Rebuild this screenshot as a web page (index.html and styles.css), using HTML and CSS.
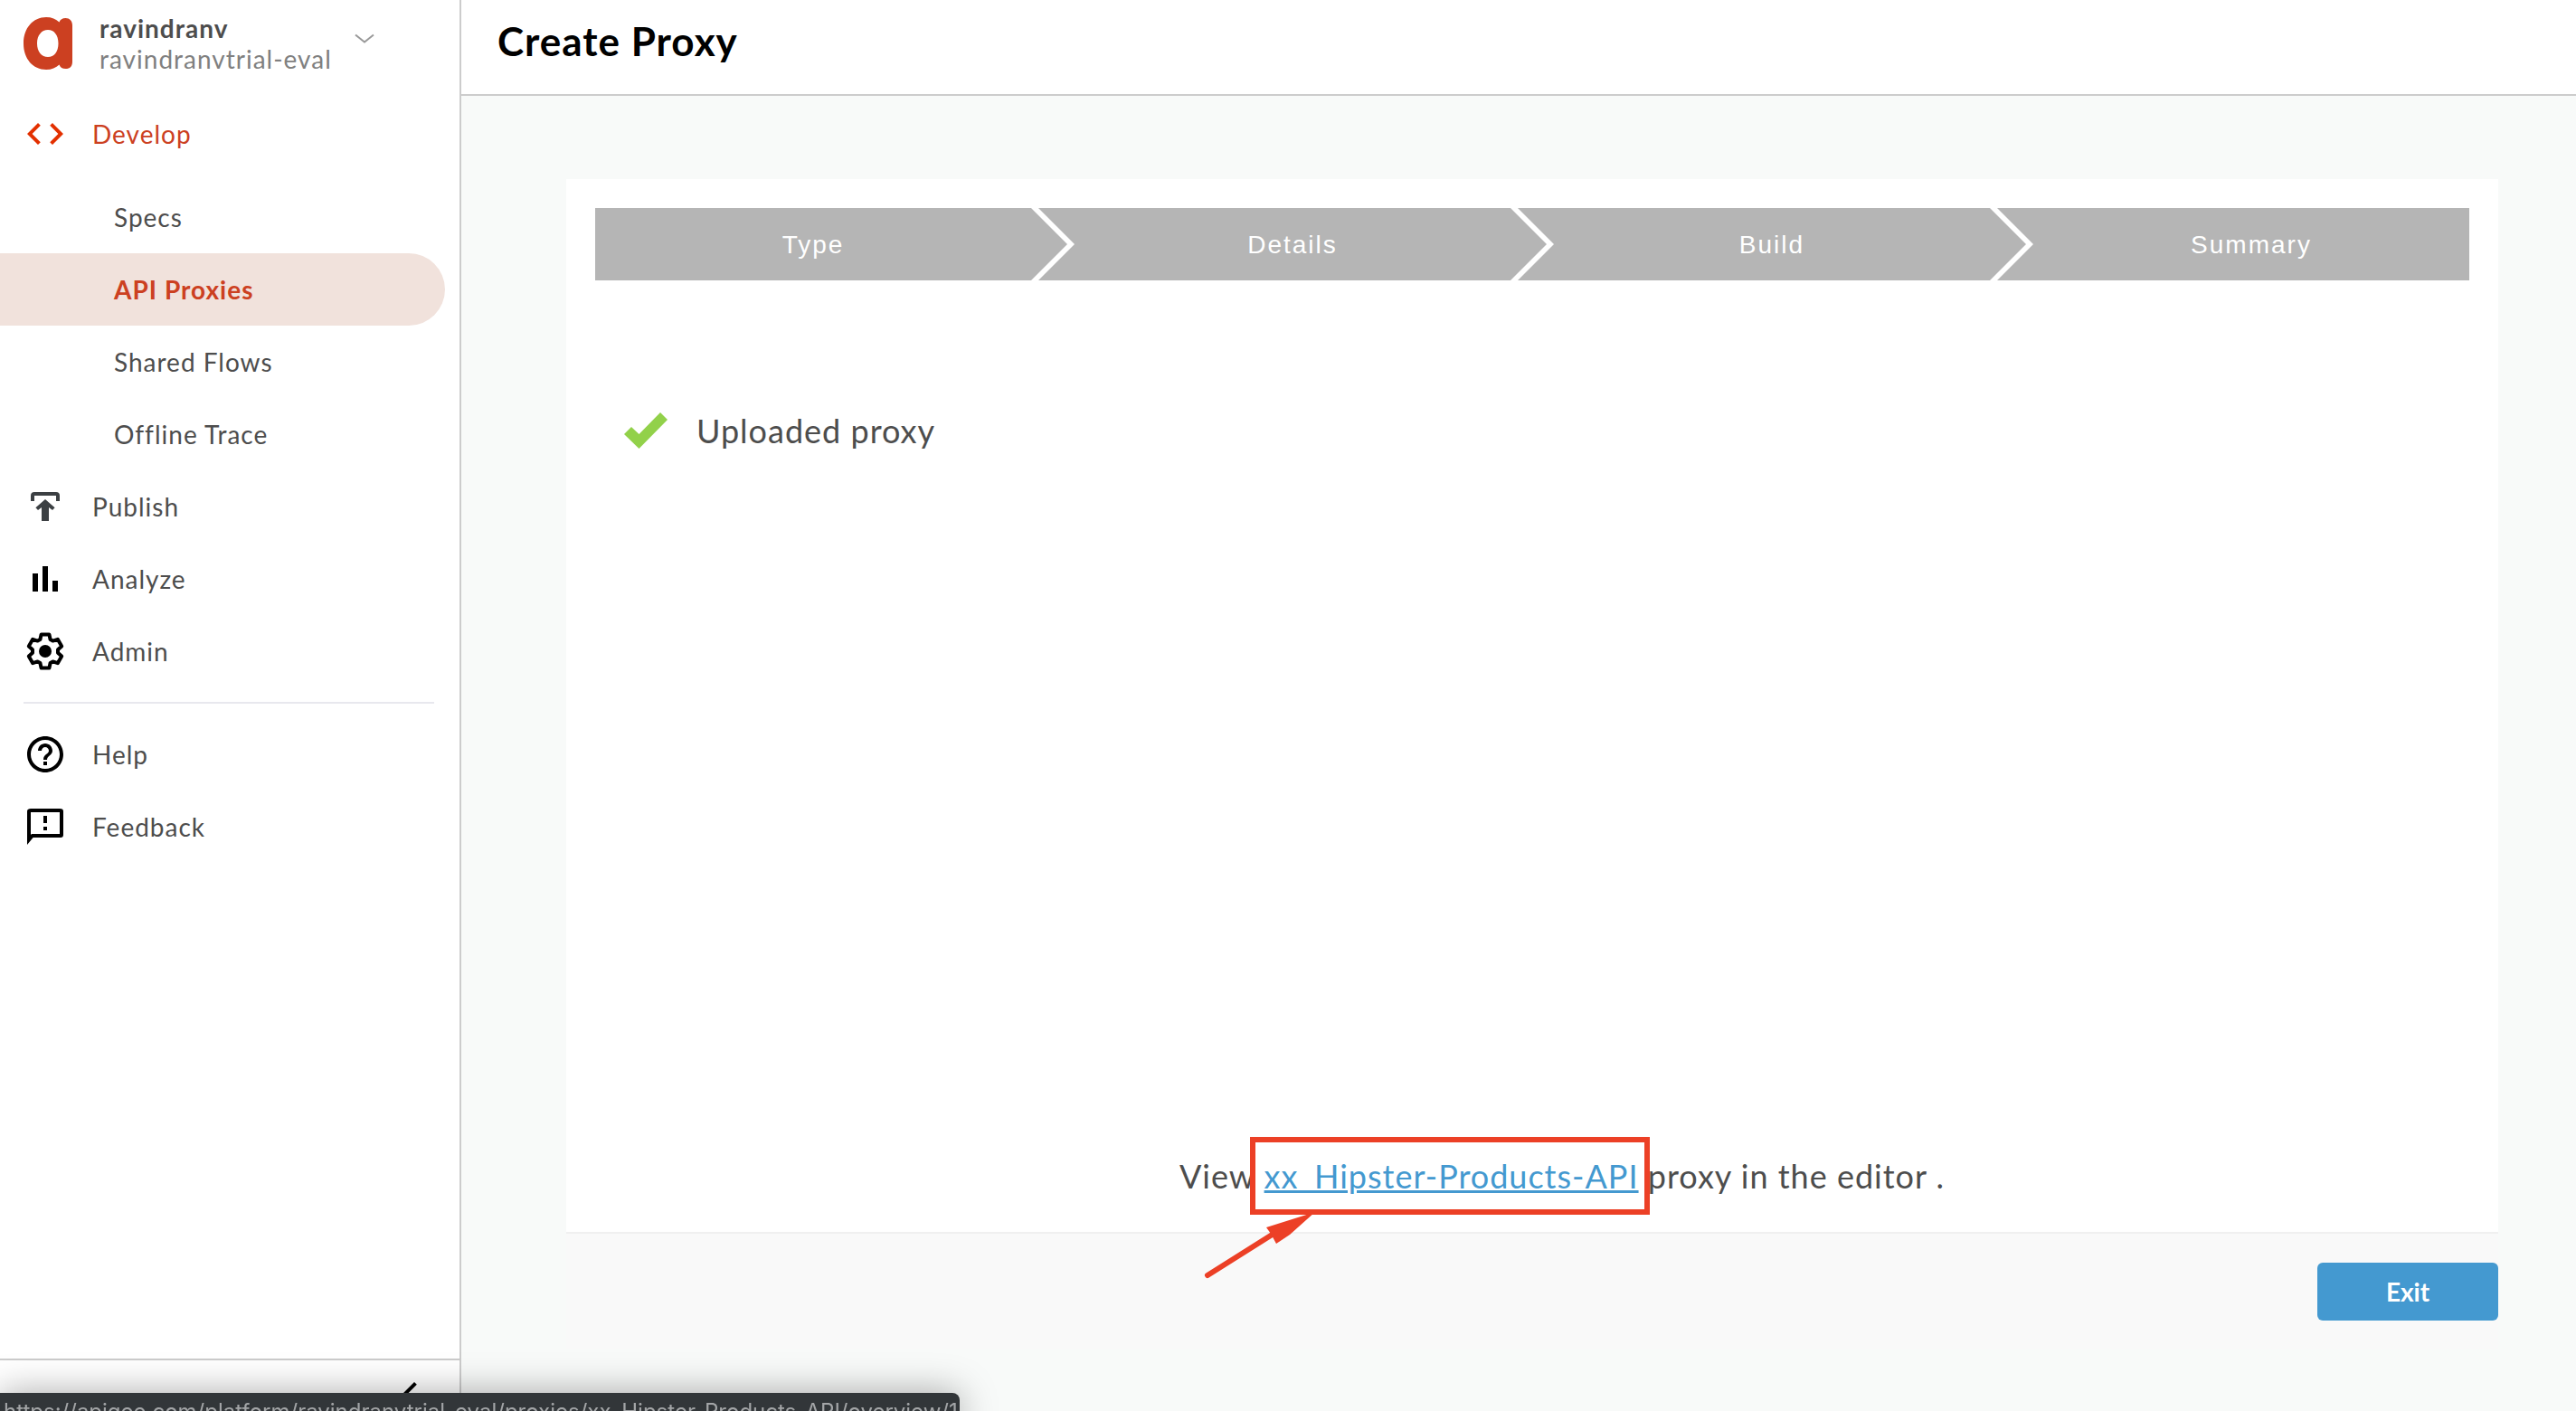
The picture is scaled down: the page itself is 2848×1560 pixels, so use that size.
FILE: index.html
```html
<!DOCTYPE html>
<html lang="en">
<head>
<meta charset="utf-8">
<meta name="viewport" content="width=device-width, initial-scale=1">
<title>Create Proxy</title>
<link rel="stylesheet" href="styles.css">
</head>
<body>
<div class="app">
  <aside class="sidebar">
    <button class="account" type="button">
      <svg class="logo" viewBox="0 0 54 58" aria-hidden="true"><path fill="#cc4021" fill-rule="evenodd" d="M25 0C31 0 36 2 39.500 5.500C40.500 2.500 43 1 46.500 1C51 1 54 4 54 9V49C54 54.500 51.500 57 46.500 57C43 57 40.500 55.500 39.500 52.500C36 56 31 58 25 58C10.500 58 0 46 0 29C0 12 10.500 0 25 0ZM27 14C20 14 15 20 15 29C15 38 20 44 27 44C34 44 38.500 38 38.500 29C38.500 20 34 14 27 14Z"/></svg>
      <span class="account-text">
        <strong class="account-user">ravindranv</strong>
        <span class="account-org">ravindranvtrial-eval</span>
      </span>
      <svg class="caret" viewBox="0 0 22 12" aria-hidden="true"><path d="M1 1.500L11 9.500L21 1.500" fill="none" stroke="#999" stroke-width="2"/></svg>
    </button>
    <nav class="nav">
      <a class="item develop" href="#develop"><svg class="icon" viewBox="0 0 24 24" aria-hidden="true"><path fill="#e33000" d="M9.400 16.600L4.800 12l4.600-4.600L8 6l-6 6 6 6zM14.600 16.600l4.600-4.600-4.600-4.600L16 6l6 6-6 6z"/></svg>Develop</a>
      <a class="item sub" href="#specs">Specs</a>
      <a class="item sub current" href="#proxies" aria-current="page">API Proxies</a>
      <a class="item sub" href="#flows">Shared Flows</a>
      <a class="item sub" href="#trace">Offline Trace</a>
      <a class="item" href="#publish"><svg class="icon" viewBox="0 0 24 24" aria-hidden="true"><path d="M5 9V6Q5 5 6 5H18Q19 5 19 6V9" fill="none" stroke="#3c4043" stroke-width="2"/><path fill="#3c4043" d="M12 8L17.300 12.600L16 14L14 12.500V20H10V12.500L8 14L6.700 12.600Z"/></svg>Publish</a>
      <a class="item" href="#analyze"><svg class="icon" viewBox="0 0 24 24" aria-hidden="true"><path d="M5 9h3v10H5zM10.500 5h3v14h-3zM16 13h3v6h-3z"/></svg>Analyze</a>
      <a class="item" href="#admin"><svg class="icon" viewBox="0 0 24 24" aria-hidden="true"><circle cx="12" cy="12" r="3.500"/><path fill="none" stroke="#000" stroke-width="2" stroke-linejoin="round" d="M9.800 2.700H14.200L14.800 5.500L16.200 6.300L18.900 5.400L21.100 9.200L19 11.100V12.900L21.100 14.800L18.900 18.600L16.200 17.700L14.800 18.500L14.200 21.300H9.800L9.200 18.500L7.800 17.700L5.100 18.600L2.900 14.800L5 12.900V11.100L2.900 9.200L5.100 5.400L7.800 6.300L9.200 5.500Z"/></svg>Admin</a>
      <hr class="rule">
      <a class="item" href="#help"><svg class="icon" viewBox="0 0 24 24" aria-hidden="true"><path d="M11 18h2v-2h-2v2zm1-16C6.480 2 2 6.480 2 12s4.480 10 10 10 10-4.480 10-10S17.520 2 12 2zm0 18c-4.410 0-8-3.590-8-8s3.590-8 8-8 8 3.590 8 8-3.590 8-8 8zm0-14c-2.210 0-4 1.790-4 4h2c0-1.100.9-2 2-2s2 .9 2 2c0 2-3 1.750-3 5h2c0-2.250 3-2.500 3-5 0-2.210-1.790-4-4-4z"/></svg>Help</a>
      <a class="item" href="#feedback"><svg class="icon" viewBox="0 0 24 24" aria-hidden="true"><path fill-rule="evenodd" d="M20 2H4c-1.100 0-1.990.4-1.990 1.500L2 22l3.300-4H20.500c1.100 0 1.500-.5 1.500-1.500V3.500C22 2.500 21.500 2 20 2zM20 16H4.500L4 16.500V4h16v12zM11 12h2v2h-2zM11 6h2v4h-2z"/></svg>Feedback</a>
    </nav>
    <footer class="collapse">
      <button class="collapse-button" type="button" aria-label="Collapse menu"><svg class="icon" viewBox="0 0 24 24" aria-hidden="true"><path d="M15.410 7.410L14 6l-6 6 6 6 1.410-1.410L10.830 12z"/></svg></button>
    </footer>
  </aside>
  <div class="page">
    <header class="page-header"><h1 class="title">Create Proxy</h1></header>
    <main class="wizard">
      <section class="card">
        <ol class="steps">
          <li class="step">Type<svg class="chevron" viewBox="0 0 48 80" aria-hidden="true"><path fill="#fff" d="M0 0H8L48 40L8 80H0L40 40Z"/></svg></li>
          <li class="step">Details<svg class="chevron" viewBox="0 0 48 80" aria-hidden="true"><path fill="#fff" d="M0 0H8L48 40L8 80H0L40 40Z"/></svg></li>
          <li class="step">Build<svg class="chevron" viewBox="0 0 48 80" aria-hidden="true"><path fill="#fff" d="M0 0H8L48 40L8 80H0L40 40Z"/></svg></li>
          <li class="step">Summary</li>
        </ol>
        <p class="result"><svg class="tick" viewBox="0 0 48 40" aria-hidden="true"><path fill="#92d14a" d="M0 24L8 16L16.500 24L40 0L48 8L16.500 40Z"/></svg>Uploaded proxy</p>
        <p class="view">View <span class="marked"><a class="link" href="#editor">xx_Hipster-Products-API</a><span class="frame"></span><svg class="arrow" viewBox="0 0 124 76" aria-hidden="true"><path d="M5 70L78 24" stroke="#ec4026" stroke-width="6" stroke-linecap="round"/><path fill="#ec4026" d="M124 0L70 17L75 24L81 35L96 25Z"/></svg></span> proxy in the editor .</p>
      </section>
      <div class="actions"><button class="exit" type="button">Exit</button></div>
    </main>
  </div>
</div>
<div class="status">https://apigee.com/platform/ravindranvtrial-eval/proxies/xx_Hipster-Products-API/overview/1</div>
</body>
</html>
```

FILE: styles.css
```css
* { box-sizing: border-box; }

body {
  margin: 0;
  overflow: hidden;
  background: #fff;
  color: #4d4d4d;
  font: 28px/34px Lato, sans-serif;
  letter-spacing: 1px;
}

button {
  border: 0;
  padding: 0;
  background: none;
  font: inherit;
  letter-spacing: inherit;
  cursor: pointer;
}

svg { display: block; flex: none; }

.app {
  display: grid;
  grid-template-columns: 510px 1fr;
  min-height: 100vh;
}

/* Sidebar */
.sidebar {
  display: flex;
  flex-direction: column;
  border-right: 2px solid #ccc;
}
.account {
  display: flex;
  align-items: flex-start;
  height: 108px;
  padding: 14px 26px 0;
  text-align: left;
}
.logo { width: 54px; height: 58px; margin-top: 5px; }
.account-text {
  display: flex;
  flex-direction: column;
  margin: 0 25px 0 30px;
}
.account-user { color: #4d4d4d; }
.account-org { color: #808080; }
.caret { width: 22px; height: 12px; margin-top: 23px; }

.nav { display: flex; flex-direction: column; }
.item {
  display: flex;
  align-items: center;
  gap: 28px;
  height: 80px;
  margin-right: 16px;
  padding-left: 26px;
  color: #4d4d4d;
  text-decoration: none;
}
.icon { width: 48px; height: 48px; }
.develop { margin-bottom: 12px; color: #cc4021; }
.sub { padding-left: 126px; }
.current {
  border-radius: 0 40px 40px 0;
  background: #f1e2dc;
  color: #cc4021;
  font-weight: 700;
}
.rule {
  width: 454px;
  height: 2px;
  margin: 16px 26px;
  border: 0;
  background: #e8e8ee;
}
.collapse {
  display: flex;
  justify-content: flex-end;
  height: 58px;
  margin-top: auto;
  padding: 12px 30px 0;
  border-top: 2px solid #ccc;
}
.collapse-button { height: 48px; }

/* Page */
.page {
  display: flex;
  flex-direction: column;
  background: #f8faf9;
}
.page-header {
  height: 106px;
  padding: 18px 40px;
  border-bottom: 2px solid #ccc;
  background: #fff;
}
.title {
  margin: 0;
  color: #000;
  font-size: 44px;
  line-height: 54px;
}
.wizard {
  margin: 92px 86px 0 116px;
  background: #f9f9f9;
}
.card {
  display: flex;
  flex-direction: column;
  min-height: 1166px;
  padding: 32px;
  border-bottom: 2px solid #f0f0f0;
  background: #fff;
  font-size: 36px;
  line-height: 44px;
}
.steps {
  display: flex;
  gap: 48px;
  margin: 0;
  padding: 0;
  background: #b5b5b5;
  list-style: none;
}
.step {
  position: relative;
  flex: 1;
  padding-top: 2px;
  color: #fff;
  font: 28px/78px "Liberation Sans", sans-serif;
  letter-spacing: 2px;
  text-align: center;
}
.chevron {
  position: absolute;
  top: 0;
  left: 100%;
  width: 48px;
  height: 80px;
}
.result {
  display: flex;
  align-items: center;
  gap: 32px;
  margin: 144px 32px 0;
}
.tick { width: 48px; height: 40px; }
.view {
  margin: auto 0 8px 66px;
  text-align: center;
}
.marked { position: relative; }
.link { color: #4499d0; }
.frame {
  position: absolute;
  inset: -21px -12px -21px -16px;
  border: 6px solid #ec4026;
}
.arrow {
  position: absolute;
  top: 62px;
  left: -68px;
  width: 124px;
  height: 76px;
}
.actions {
  display: flex;
  justify-content: flex-end;
  padding: 32px 0;
}
.exit {
  width: 200px;
  height: 64px;
  border-radius: 6px;
  background: #4499d0;
  color: #fff;
  font-weight: 700;
  letter-spacing: 0;
}

/* Browser status bubble */
.status {
  position: fixed;
  bottom: -20px;
  left: 0;
  height: 40px;
  padding: 0 2px 0 4px;
  border-radius: 0 8px 0 0;
  background: #323639;
  box-shadow: 0 0 40px rgba(0, 0, 0, 0.35);
  color: #a3a5a7;
  font: 24px/42px Inter, sans-serif;
  letter-spacing: 0;
  white-space: nowrap;
}
```
